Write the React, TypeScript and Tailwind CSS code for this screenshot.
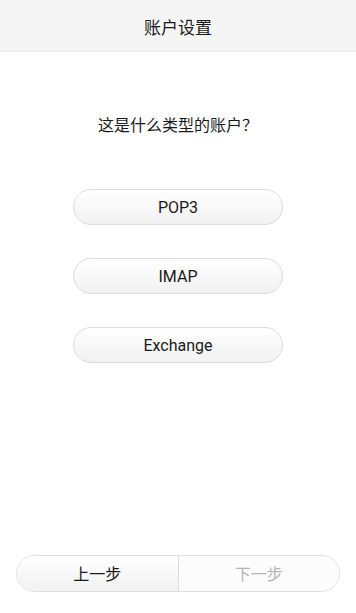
const font = "font-['Roboto','Noto_Sans_CJK_SC',sans-serif]";

const types = ['POP3', 'IMAP', 'Exchange'];

export default function App() {
  return (
    <div className={`flex h-[613px] w-[356px] flex-col bg-white ${font}`}>
      <header className="flex h-[52px] items-center justify-center border-b border-[#ececec] bg-[#f5f5f5] pt-[6px]">
        <h1 className="text-[17px] text-[#1a1a1a]">账户设置</h1>
      </header>

      <main className="flex flex-1 flex-col items-center">
        <p className="mt-[62px] text-[16px] leading-[24px] text-[#1a1a1a]">这是什么类型的账户？</p>
        <div className="mt-[51px] flex flex-col gap-[33px]">
          {types.map((t) => (
            <button
              key={t}
              className="h-[36px] w-[210px] rounded-full border border-[#dcdcdc] bg-gradient-to-b from-white to-[#f1f1f1] pt-[2px] text-[16px] text-[#1a1a1a]"
            >
              {t}
            </button>
          ))}
        </div>
      </main>

      <footer className="mb-[21px] flex justify-center">
        <div className="flex h-[37px] w-[324px] overflow-hidden rounded-full border border-[#e0e0e0]">
          <button className="flex-1 border-r border-[#dcdcdc] bg-gradient-to-b from-white to-[#f1f1f1] pt-[2px] text-[16px] text-[#1a1a1a]">
            上一步
          </button>
          <button className="flex-1 bg-[#fcfcfc] pt-[2px] text-[16px] text-[#b5b5b5]">下一步</button>
        </div>
      </footer>
    </div>
  );
}
